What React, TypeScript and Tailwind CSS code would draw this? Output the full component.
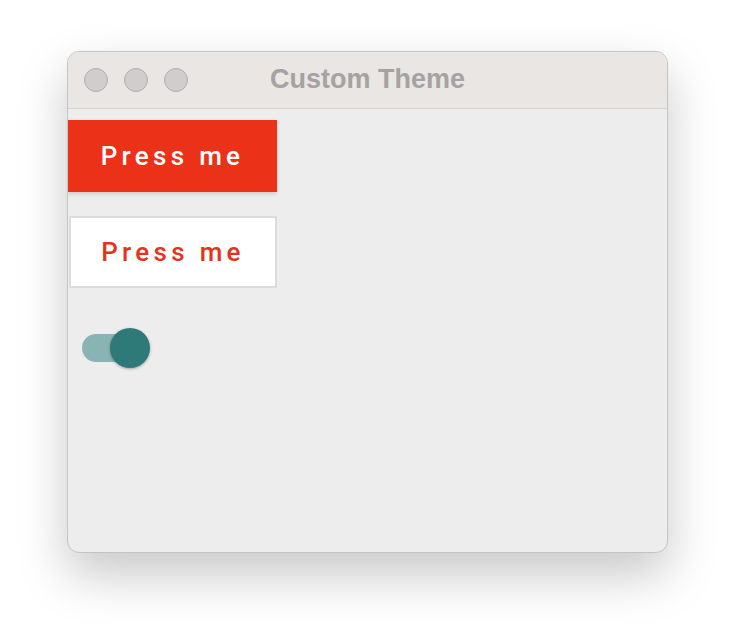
import React from "react";

export default function App() {
  return (
    <div className="min-h-[636px] w-[736px] bg-white pt-[51px] pl-[67px]">
      <div className="flex h-[502px] w-[601px] flex-col overflow-hidden rounded-[12px] border border-[#c4c4c4] bg-[#ededed] shadow-[0_22px_50px_rgba(0,0,0,0.22)]">
        <div className="relative flex h-[57px] shrink-0 items-center border-b border-[#d3d1d0] bg-[#e9e6e4] pl-[16px]">
          <div className="flex gap-[16px]">
            <div className="h-[24px] w-[24px] rounded-full border border-[#b3afae] bg-[#d1cdcc]" />
            <div className="h-[24px] w-[24px] rounded-full border border-[#b3afae] bg-[#d1cdcc]" />
            <div className="h-[24px] w-[24px] rounded-full border border-[#b3afae] bg-[#d1cdcc]" />
          </div>
          <div
            className="absolute inset-x-0 top-0 flex h-[55px] items-center justify-center text-[27px] font-bold text-[#a5a2a1]"
            style={{ fontFamily: '"Liberation Sans", Arial, sans-serif' }}
          >
            Custom Theme
          </div>
        </div>
        <div className="flex flex-col items-start pt-[11px]" style={{ fontFamily: 'Roboto, "Noto Sans", sans-serif' }}>
          <button className="flex h-[72px] w-[209px] items-center justify-center bg-[#ec3119] text-[26px] font-medium tracking-[0.165em] text-white shadow-[0_2px_4px_rgba(0,0,0,0.15)]">
            Press me
          </button>
          <button className="ml-[1px] mt-[24px] flex h-[72px] w-[208px] items-center justify-center border-2 border-[#dcdcdc] bg-white text-[26px] font-medium tracking-[0.165em] text-[#e6321d]">
            Press me
          </button>
          <div className="relative ml-[14px] mt-[40px] flex h-[40px] w-[68px] items-center">
            <div className="h-[28px] w-[48px] rounded-full bg-[#8ab4b3]" />
            <div className="absolute left-[28px] top-0 h-[40px] w-[40px] rounded-full bg-[#2e7a78] shadow-[0_1px_3px_rgba(0,0,0,0.3)]" />
          </div>
        </div>
      </div>
    </div>
  );
}
